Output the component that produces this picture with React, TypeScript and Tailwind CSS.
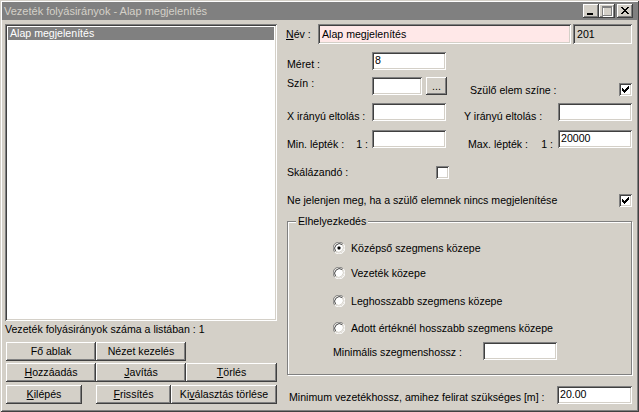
import React from "react";

const raised =
  "shadow-[inset_-1px_-1px_#404040,inset_1px_1px_#ffffff,inset_-2px_-2px_#808080,inset_2px_2px_#d4d0c8]";
const sunken =
  "shadow-[inset_1px_1px_#808080,inset_-1px_-1px_#ffffff,inset_2px_2px_#404040,inset_-2px_-2px_#d4d0c8]";

const Field = ({ className = "", value = "" }: { className?: string; value?: string }) => (
  <div className={`${sunken} h-[18px] bg-white pl-[3px] pt-[1px] leading-[15px] shrink-0 ${className}`}>{value}</div>
);

const Check = ({ checked = false }: { checked?: boolean }) => {
  const cols = [3, 4, 5, 6, 7, 8, 9];
  const ys = [5, 6, 7, 6, 5, 4, 3];
  return (
    <div className={`${sunken} w-[13px] h-[13px] bg-white shrink-0`}>
      {checked && (
        <svg width="13" height="13" shapeRendering="crispEdges">
          {cols.map((x, i) => (
            <rect key={x} x={x} y={ys[i]} width="1" height="3" fill="#000" />
          ))}
        </svg>
      )}
    </div>
  );
};

const Radio = ({ checked = false, label }: { checked?: boolean; label: string }) => (
  <div className="flex items-center h-[14px] gap-[6px]">
    <svg width="12" height="12" className="shrink-0">
      <circle cx="6" cy="6" r="5" fill="#fff" />
      <path d="M10.2 1.8 A5.9 5.9 0 0 0 1.8 10.2" stroke="#808080" fill="none" />
      <path d="M1.8 10.2 A5.9 5.9 0 0 0 10.2 1.8" stroke="#ffffff" fill="none" />
      <path d="M9.3 2.7 A4.7 4.7 0 0 0 2.7 9.3" stroke="#404040" fill="none" />
      <path d="M2.7 9.3 A4.7 4.7 0 0 0 9.3 2.7" stroke="#d4d0c8" fill="none" />
      {checked && <rect x="4.5" y="4.5" width="3" height="3" rx="1" fill="#000" />}
    </svg>
    <span className="leading-[13px]">{label}</span>
  </div>
);

const Btn = ({ w, children }: { w: string; children: React.ReactNode }) => (
  <div className={`${raised} ${w} h-[19px] flex items-center justify-center leading-[13px] shrink-0`}>
    {children}
  </div>
);

const TitleBtn = ({ children }: { children: React.ReactNode }) => (
  <div className={`${raised} w-[16px] h-[14px] bg-[#d4d0c8]`}>
    <svg width="16" height="14" shapeRendering="crispEdges">
      {children}
    </svg>
  </div>
);

export default function App() {
  const xs = [0, 1, 2, 3, 4, 5, 6];
  return (
    <div className="w-[639px] h-[412px] overflow-hidden bg-[#d4d0c8] p-[2px] shadow-[inset_1px_1px_#d4d0c8,inset_-1px_-1px_#404040,inset_2px_2px_#ffffff,inset_-2px_-2px_#808080] font-['Liberation_Sans',Arial,sans-serif] text-[10.6px] text-black flex flex-col">
      {/* title bar */}
      <div className="h-[18px] shrink-0 bg-[#808080] flex items-center pl-[2px] pr-[4px] text-[#d4d0c8]">
        <span className="flex-1 leading-[13px] text-[11px]">Vezeték folyásirányok - Alap megjelenítés</span>
        <div className="flex">
          <TitleBtn>
            <rect x="4" y="9" width="6" height="2" fill="#000" />
          </TitleBtn>
          <TitleBtn>
            <rect x="4" y="3" width="9" height="9" fill="none" stroke="#ffffff" />
            <rect x="3" y="2" width="9" height="9" fill="none" stroke="#808080" />
            <rect x="3" y="2" width="9" height="2" fill="#808080" />
          </TitleBtn>
          <div className="ml-[2px]">
            <TitleBtn>
              {xs.map((i) => (
                <React.Fragment key={i}>
                  <rect x={4 + i} y={3 + i} width="2" height="1" fill="#000" />
                  <rect x={10 - i} y={3 + i} width="2" height="1" fill="#000" />
                </React.Fragment>
              ))}
            </TitleBtn>
          </div>
        </div>
      </div>

      <div className="flex flex-1">
        {/* left column */}
        <div className="ml-[3px] mt-[4px] w-[272px] flex flex-col">
          <div className={`${sunken} h-[297px] bg-white p-[3px]`}>
            <div className="h-[13px] leading-[13px] pl-[2px] bg-[#808080] text-white">Alap megjelenítés</div>
          </div>
          <div className="mt-[1px] h-[14px] leading-[14px]">Vezeték folyásirányok száma a listában : 1</div>
          <div className="mt-[6px] ml-[1px] flex">
            <Btn w="w-[90px]">Fő ablak</Btn>
            <Btn w="w-[90px]">Nézet kezelés</Btn>
          </div>
          <div className="mt-[2px] ml-[1px] flex">
            <Btn w="w-[90px]">
              <span><u>H</u>ozzáadás</span>
            </Btn>
            <Btn w="w-[90px]">
              <span><u>J</u>avítás</span>
            </Btn>
            <Btn w="w-[91px]">
              <span><u>T</u>örlés</span>
            </Btn>
          </div>
          <div className="mt-[3px] ml-[1px] flex">
            <Btn w="w-[76px]">
              <span><u>K</u>ilépés</span>
            </Btn>
            <div className="w-[14px]" />
            <Btn w="w-[75px]">
              <span><u>F</u>rissítés</span>
            </Btn>
            <Btn w="w-[106px]">
              <span>Ki<u>v</u>álasztás törlése</span>
            </Btn>
          </div>
        </div>

        {/* right column */}
        <div className="ml-[9px] w-[346px] flex flex-col">
          <div className="mt-[4px] h-[20px] flex items-center">
            <span className="w-[32px] leading-[13px]"><u>N</u>év :</span>
            <div className={`${sunken} w-[253px] h-[20px] bg-[#ffe8e8] pl-[4px] leading-[20px]`}>Alap megjelenítés</div>
            <div className={`${sunken} ml-[2px] w-[59px] h-[20px] bg-[#d4d0c8] pl-[4px] leading-[20px]`}>201</div>
          </div>

          <div className="mt-[8px] h-[18px] flex items-start">
            <span className="w-[86px] mt-[6px] pl-[1px] leading-[13px]">Méret :</span>
            <Field className="w-[74px]" value="8" />
          </div>

          <div className="mt-[7px] h-[18px] flex items-start">
            <span className="w-[86px] pl-[1px] leading-[13px]">Szín :</span>
            <Field className="w-[50px]" />
            <div className={`${raised} ml-[4px] w-[21px] h-[18px] flex items-center justify-center leading-[13px]`}>...</div>
            <span className="ml-[23px] mt-[7px] leading-[13px]">Szülő elem színe :</span>
            <div className="flex-1" />
            <div className="mt-[6px]">
              <Check checked />
            </div>
          </div>

          <div className="mt-[8px] h-[18px] flex items-start">
            <span className="w-[86px] mt-[7px] pl-[1px] leading-[13px]">X irányú eltolás :</span>
            <Field className="w-[74px]" />
            <span className="ml-[18px] w-[94px] mt-[7px] leading-[13px]">Y irányú eltolás :</span>
            <Field className="w-[74px]" />
          </div>

          <div className="mt-[9px] h-[18px] flex items-start">
            <div className="w-[86px] mt-[8px] pl-[1px] pr-[4px] flex justify-between leading-[13px]">
              <span>Min. lépték :</span>
              <span>1 :</span>
            </div>
            <Field className="w-[74px]" />
            <div className="ml-[18px] w-[94px] mt-[8px] pl-[4px] pr-[5px] flex justify-between leading-[13px]">
              <span>Max. lépték :</span>
              <span>1 :</span>
            </div>
            <Field className="w-[74px]" value="20000" />
          </div>

          <div className="mt-[18px] h-[13px] flex items-center">
            <span className="w-[150px] pl-[1px] leading-[13px]">Skálázandó :</span>
            <Check />
          </div>

          <div className="mt-[15px] h-[13px] flex items-center">
            <span className="flex-1 pl-[1px] leading-[13px]">Ne jelenjen meg, ha a szülő elemnek nincs megjelenítése</span>
            <Check checked />
          </div>

          <div className="relative mt-[14px] ml-[1px] w-[345px] h-[154px] shrink-0 border border-[#808080] shadow-[inset_1px_1px_#ffffff,1px_1px_#ffffff] pl-[45px] flex flex-col">
            <span className="absolute -top-[7px] left-[8px] px-[2px] bg-[#d4d0c8] leading-[13px]">Elhelyezkedés</span>
            <div className="mt-[19px]">
              <Radio checked label="Középső szegmens közepe" />
            </div>
            <div className="mt-[11px]">
              <Radio label="Vezeték közepe" />
            </div>
            <div className="mt-[14px]">
              <Radio label="Leghosszabb szegmens közepe" />
            </div>
            <div className="mt-[13px]">
              <Radio label="Adott értéknél hosszabb szegmens közepe" />
            </div>
            <div className="mt-[7px] h-[18px] flex items-start">
              <span className="w-[150px] mt-[4px] leading-[13px]">Minimális szegmenshossz :</span>
              <Field className="w-[74px]" />
            </div>
          </div>

          <div className="mt-[11px] h-[18px] flex items-start">
            <span className="flex-1 pl-[3px] mt-[5px] leading-[13px]">Minimum vezetékhossz, amihez felirat szükséges [m] :</span>
            <Field className="w-[75px]" value="20.00" />
          </div>
        </div>
      </div>
    </div>
  );
}
